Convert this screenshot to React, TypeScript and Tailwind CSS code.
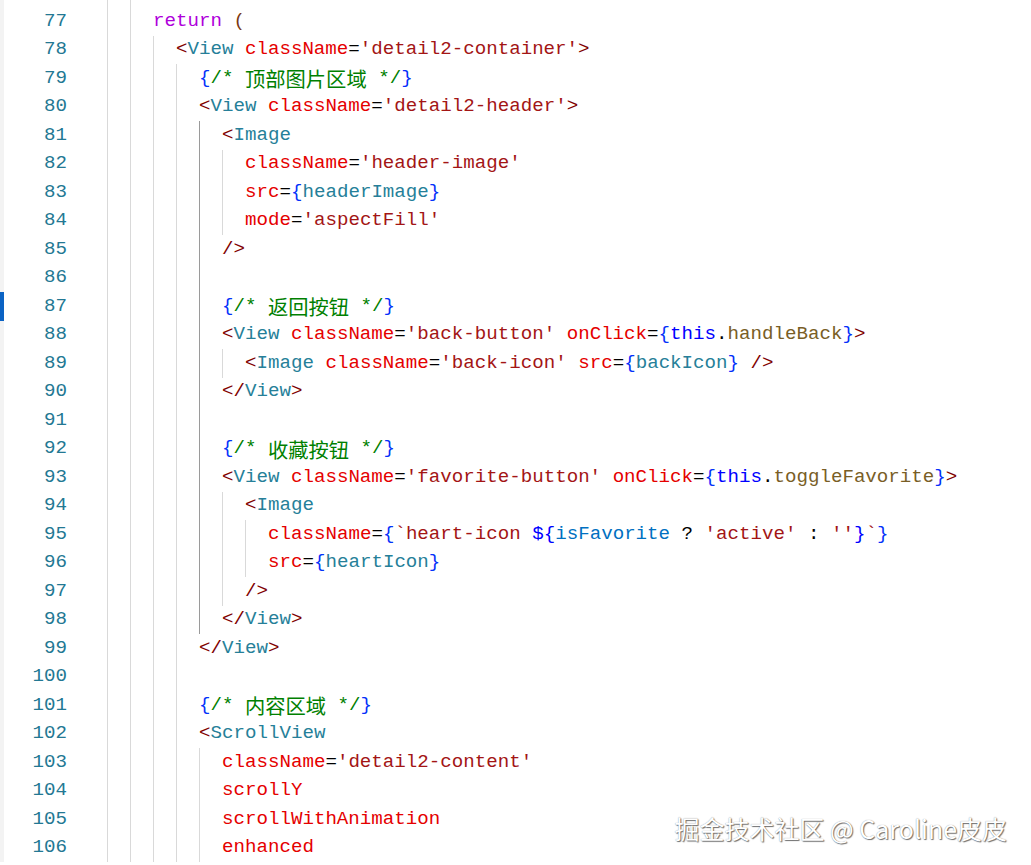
import React from "react";

type Tok = [string, string] | [string, string, "cjk"];

const KW = "text-[#af00db]";
const PAREN = "text-[#7b3814]";
const TB = "text-[#800000]";
const TAG = "text-[#267f99]";
const ATTR = "text-[#e50000]";
const P = "text-[#000000]";
const STR = "text-[#a31515]";
const BR = "text-[#0431fa]";
const CM = "text-[#008000]";
const THIS = "text-[#0000ff]";
const FN = "text-[#795e26]";
const ID = "text-[#267f99]";
const VAR = "text-[#0070c1]";

type Line = { n: number; indent: number; toks: Tok[] };

const attrStr = (a: string, s: string): Tok[] => [
  [a, ATTR],
  ["=", P],
  [s, STR],
];
const attrId = (a: string, id: string): Tok[] => [
  [a, ATTR],
  ["=", P],
  ["{", BR],
  [id, ID],
  ["}", BR],
];
const comment = (zh: string): Tok[] => [
  ["{", BR],
  ["/* ", CM],
  [zh, CM, "cjk"],
  [" */", CM],
  ["}", BR],
];

const lines: Line[] = [
  { n: 77, indent: 4, toks: [["return", KW], [" ", P], ["(", PAREN]] },
  {
    n: 78,
    indent: 6,
    toks: [["<", TB], ["View", TAG], [" ", P], ...attrStr("className", "'detail2-container'"), [">", TB]],
  },
  { n: 79, indent: 8, toks: comment("顶部图片区域") },
  {
    n: 80,
    indent: 8,
    toks: [["<", TB], ["View", TAG], [" ", P], ...attrStr("className", "'detail2-header'"), [">", TB]],
  },
  { n: 81, indent: 10, toks: [["<", TB], ["Image", TAG]] },
  { n: 82, indent: 12, toks: attrStr("className", "'header-image'") },
  { n: 83, indent: 12, toks: attrId("src", "headerImage") },
  { n: 84, indent: 12, toks: attrStr("mode", "'aspectFill'") },
  { n: 85, indent: 10, toks: [["/>", TB]] },
  { n: 86, indent: 10, toks: [] },
  { n: 87, indent: 10, toks: comment("返回按钮") },
  {
    n: 88,
    indent: 10,
    toks: [
      ["<", TB],
      ["View", TAG],
      [" ", P],
      ...attrStr("className", "'back-button'"),
      [" ", P],
      ["onClick", ATTR],
      ["=", P],
      ["{", BR],
      ["this", THIS],
      [".", P],
      ["handleBack", FN],
      ["}", BR],
      [">", TB],
    ],
  },
  {
    n: 89,
    indent: 12,
    toks: [
      ["<", TB],
      ["Image", TAG],
      [" ", P],
      ...attrStr("className", "'back-icon'"),
      [" ", P],
      ...attrId("src", "backIcon"),
      [" ", P],
      ["/>", TB],
    ],
  },
  { n: 90, indent: 10, toks: [["</", TB], ["View", TAG], [">", TB]] },
  { n: 91, indent: 10, toks: [] },
  { n: 92, indent: 10, toks: comment("收藏按钮") },
  {
    n: 93,
    indent: 10,
    toks: [
      ["<", TB],
      ["View", TAG],
      [" ", P],
      ...attrStr("className", "'favorite-button'"),
      [" ", P],
      ["onClick", ATTR],
      ["=", P],
      ["{", BR],
      ["this", THIS],
      [".", P],
      ["toggleFavorite", FN],
      ["}", BR],
      [">", TB],
    ],
  },
  { n: 94, indent: 12, toks: [["<", TB], ["Image", TAG]] },
  {
    n: 95,
    indent: 14,
    toks: [
      ["className", ATTR],
      ["=", P],
      ["{", BR],
      ["`heart-icon ", STR],
      ["${", THIS],
      ["isFavorite", VAR],
      [" ? ", P],
      ["'active'", STR],
      [" : ", P],
      ["''", STR],
      ["}", THIS],
      ["`", STR],
      ["}", BR],
    ],
  },
  { n: 96, indent: 14, toks: attrId("src", "heartIcon") },
  { n: 97, indent: 12, toks: [["/>", TB]] },
  { n: 98, indent: 10, toks: [["</", TB], ["View", TAG], [">", TB]] },
  { n: 99, indent: 8, toks: [["</", TB], ["View", TAG], [">", TB]] },
  { n: 100, indent: 8, toks: [] },
  { n: 101, indent: 8, toks: comment("内容区域") },
  { n: 102, indent: 8, toks: [["<", TB], ["ScrollView", TAG]] },
  { n: 103, indent: 10, toks: attrStr("className", "'detail2-content'") },
  { n: 104, indent: 10, toks: [["scrollY", ATTR]] },
  { n: 105, indent: 10, toks: [["scrollWithAnimation", ATTR]] },
  { n: 106, indent: 10, toks: [["enhanced", ATTR]] },
];

function Guides({ units, activeFrom, activeTo, n }: { units: number; activeFrom: number; activeTo: number; n: number }) {
  const arr = Array.from({ length: units }, (_, i) => i);
  return (
    <>
      {arr.map((i) => {
        const active = i === 4 && n >= activeFrom && n <= activeTo;
        return (
          <span
            key={i}
            className={
              active
                ? "w-[23px] shrink-0 self-stretch border-l border-[#9a9a9a]"
                : "w-[23px] shrink-0 self-stretch border-l border-[#d9d9d9]"
            }
          />
        );
      })}
    </>
  );
}

export default function App() {
  return (
    <div className="relative w-[1031px] h-[865px] bg-white overflow-hidden font-['Liberation_Mono','Noto_Sans_CJK_SC',monospace] text-[19.15px]">
      {/* leading partial row */}
      <div className="flex h-[7px]">
        <div className="w-[4px] shrink-0 bg-[#f3f3f3]" />
        <div className="w-[103px] shrink-0" />
        <div className="flex">
          <Guides units={2} activeFrom={0} activeTo={0} n={76} />
        </div>
      </div>
      {lines.map((l) => {
        const units = l.indent / 2;
        return (
          <div key={l.n} className="flex h-[28.5px]">
            <div
              className={
                l.n === 87
                  ? "w-[4px] shrink-0 bg-[#0b63c4]"
                  : "w-[4px] shrink-0 bg-[#f3f3f3]"
              }
            />
            <div className="w-[63px] shrink-0 flex items-center justify-end text-[#237893]">
              {l.n}
            </div>
            <div className="w-[40px] shrink-0" />
            <div className="flex items-stretch">
              <Guides units={units} activeFrom={81} activeTo={98} n={l.n} />
              <div className="flex items-center whitespace-pre">
                {l.toks.map((t, i) =>
                  t[2] === "cjk" ? (
                    <span
                      key={i}
                      className={`${t[1]} font-['Noto_Sans_CJK_SC',sans-serif] text-[20.3px] leading-none`}
                    >
                      {t[0]}
                    </span>
                  ) : (
                    <span key={i} className={t[1]}>
                      {t[0]}
                    </span>
                  )
                )}
              </div>
            </div>
          </div>
        );
      })}
      <div className="absolute right-[24px] top-[812px] font-['Noto_Sans_CJK_SC','Noto_Sans',sans-serif] text-[25px] leading-[33px] text-white [text-shadow:1px_1px_1px_rgba(0,0,0,0.55),0_0_1px_rgba(0,0,0,0.45)]">
        掘金技术社区 @ Caroline皮皮
      </div>
    </div>
  );
}
